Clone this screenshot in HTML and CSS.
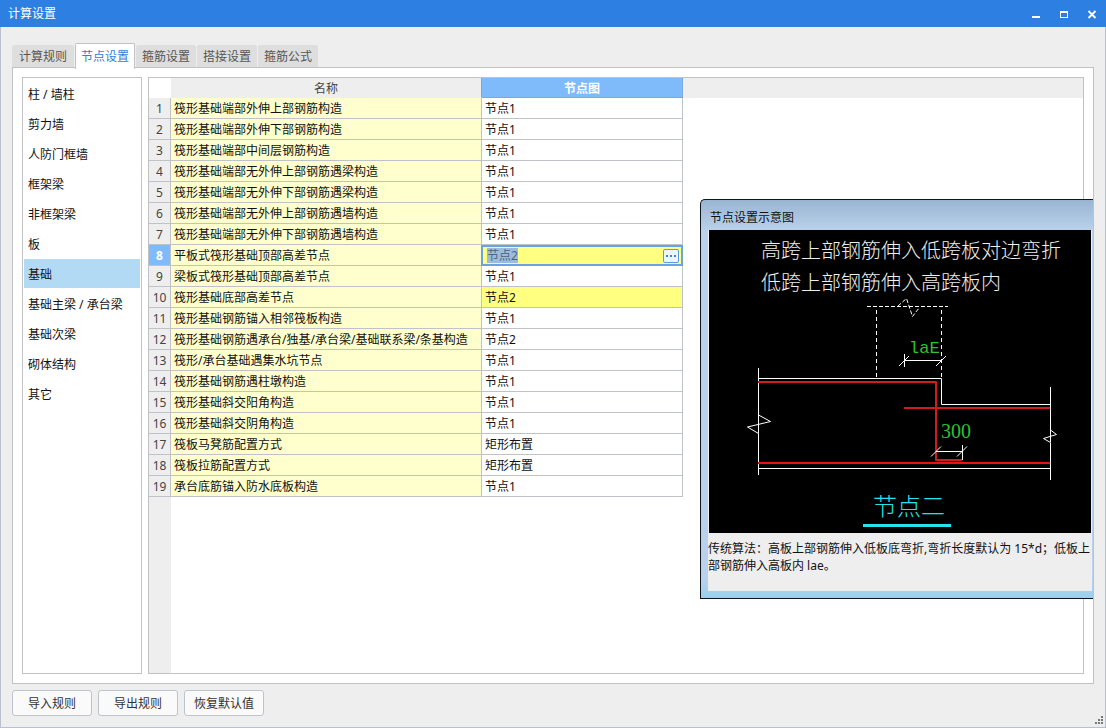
FILE: index.html
```html
<!DOCTYPE html>
<html lang="zh-CN">
<head>
<meta charset="utf-8">
<meta name="viewport" content="width=device-width, initial-scale=1">
<title>计算设置</title>
<link rel="stylesheet" href="styles.css">
</head>
<body>
<div class="window">
  <header class="titlebar">
    <h1 class="titlebar-text">计算设置</h1>
    <div class="window-controls">
      <button type="button" class="window-btn" aria-label="最小化"><svg width="10" height="10" viewBox="0 0 10 10"><path d="M1 7h8v2H1z" fill="#fff"/></svg></button>
      <button type="button" class="window-btn" aria-label="最大化"><svg width="10" height="10" viewBox="0 0 10 10"><path d="M1 2h8v7H1zM2 4v4h6V4z" fill="#fff" fill-rule="evenodd"/></svg></button>
      <button type="button" class="window-btn" aria-label="关闭"><svg width="10" height="10" viewBox="0 0 10 10"><path d="M1.500 2l7 7M8.500 2l-7 7" stroke="#fff" stroke-width="1.800"/></svg></button>
    </div>
  </header>

  <div class="tabs" role="tablist">
    <button type="button" role="tab" class="tab" aria-selected="false">计算规则</button>
    <button type="button" role="tab" class="tab tab-active" aria-selected="true">节点设置</button>
    <button type="button" role="tab" class="tab" aria-selected="false">箍筋设置</button>
    <button type="button" role="tab" class="tab" aria-selected="false">搭接设置</button>
    <button type="button" role="tab" class="tab" aria-selected="false">箍筋公式</button>
  </div>

  <main class="page">
    <nav class="categories">
      <a class="category" href="#">柱 / 墙柱</a>
      <a class="category" href="#">剪力墙</a>
      <a class="category" href="#">人防门框墙</a>
      <a class="category" href="#">框架梁</a>
      <a class="category" href="#">非框架梁</a>
      <a class="category" href="#">板</a>
      <a class="category category-active" href="#" aria-current="true">基础</a>
      <a class="category" href="#">基础主梁 / 承台梁</a>
      <a class="category" href="#">基础次梁</a>
      <a class="category" href="#">砌体结构</a>
      <a class="category" href="#">其它</a>
    </nav>

    <div class="grid-pane">
      <table class="grid">
        <colgroup><col class="col-index"><col class="col-name"><col class="col-node"></colgroup>
        <thead><tr><td class="corner"></td><th scope="col" class="head-name">名称</th><th scope="col" class="head-active">节点图</th></tr></thead>
        <tbody>
          <tr><th scope="row">1</th><td>筏形基础端部外伸上部钢筋构造</td><td>节点1</td></tr>
          <tr><th scope="row">2</th><td>筏形基础端部外伸下部钢筋构造</td><td>节点1</td></tr>
          <tr><th scope="row">3</th><td>筏形基础端部中间层钢筋构造</td><td>节点1</td></tr>
          <tr><th scope="row">4</th><td>筏形基础端部无外伸上部钢筋遇梁构造</td><td>节点1</td></tr>
          <tr><th scope="row">5</th><td>筏形基础端部无外伸下部钢筋遇梁构造</td><td>节点1</td></tr>
          <tr><th scope="row">6</th><td>筏形基础端部无外伸上部钢筋遇墙构造</td><td>节点1</td></tr>
          <tr><th scope="row">7</th><td>筏形基础端部无外伸下部钢筋遇墙构造</td><td>节点1</td></tr>
          <tr class="row-active"><th scope="row">8</th><td>平板式筏形基础顶部高差节点</td><td class="cell-editing"><div class="editor"><input class="editor-input" type="text" value="节点2" aria-label="平板式筏形基础顶部高差节点"><button type="button" class="editor-more" aria-label="选择节点图"><svg width="10" height="2" viewBox="0 0 10 2"><path d="M0 0h2v2H0zM4 0h2v2H4zM8 0h2v2H8z" fill="#3d86cc"/></svg></button></div></td></tr>
          <tr><th scope="row">9</th><td>梁板式筏形基础顶部高差节点</td><td>节点1</td></tr>
          <tr><th scope="row">10</th><td>筏形基础底部高差节点</td><td class="cell-changed">节点2</td></tr>
          <tr><th scope="row">11</th><td>筏形基础钢筋锚入相邻筏板构造</td><td>节点1</td></tr>
          <tr><th scope="row">12</th><td>筏形基础钢筋遇承台/独基/承台梁/基础联系梁/条基构造</td><td>节点2</td></tr>
          <tr><th scope="row">13</th><td>筏形/承台基础遇集水坑节点</td><td>节点1</td></tr>
          <tr><th scope="row">14</th><td>筏形基础钢筋遇柱墩构造</td><td>节点1</td></tr>
          <tr><th scope="row">15</th><td>筏形基础斜交阳角构造</td><td>节点1</td></tr>
          <tr><th scope="row">16</th><td>筏形基础斜交阴角构造</td><td>节点1</td></tr>
          <tr><th scope="row">17</th><td>筏板马凳筋配置方式</td><td>矩形布置</td></tr>
          <tr><th scope="row">18</th><td>筏板拉筋配置方式</td><td>矩形布置</td></tr>
          <tr><th scope="row">19</th><td>承台底筋锚入防水底板构造</td><td>节点1</td></tr>
        </tbody>
      </table>
    </div>

    <aside class="preview" aria-label="节点设置示意图">
      <h2 class="preview-title">节点设置示意图</h2>
      <div class="preview-body">
        <svg class="diagram" viewBox="709 230 382 303" role="img" aria-label="节点二">
          <rect x="709" y="230" width="382" height="303" fill="#000"/>
          <g class="diagram-note">
            <text x="761" y="258">高跨上部钢筋伸入低跨板对边弯折</text>
            <text x="761" y="290">低跨上部钢筋伸入高跨板内</text>
          </g>
          <g fill="none" stroke="#fff">
            <path d="M867 306.500H948" stroke-dasharray="4 2"/>
            <path d="M876.500 310V378M941.500 310V378" stroke-dasharray="4 3"/>
            <path d="M898 306L906.500 298.500L912.500 316.500L919 308" stroke-dasharray="4 2"/>
            <path d="M904.500 354V367M904 360.500H942M899 366L909 356M936 366L946 356"/>
            <path d="M758.500 368V415L770.500 421.500L747.500 427L758.500 433.500V475M758.500 415V433.500"/>
            <path d="M758 378.500H941.500V404.500H1050M758 468.500H1050"/>
            <path d="M1050.500 387V430L1056.500 434.500L1043.500 438.500L1050.500 442.500V480M1050.500 430V442"/>
          </g>
          <g fill="none" stroke="#d01c20" stroke-width="2">
            <path d="M758 382H936V460H962M904 408H1050" stroke-linejoin="round"/>
            <path d="M758 463H1050" stroke="#e61216"/>
          </g>
          <path d="M936 451.500H963M962.500 445V460M931 456.500L941 446.500M957 456.500L967 446.500" fill="none" stroke="#fff"/>
          <text class="diagram-anchor" x="909" y="353">laE</text>
          <text class="diagram-length" x="941" y="438">300</text>
          <text class="diagram-name" x="873" y="515">节点二</text>
          <path d="M863 525.500H951" stroke="#23e4ec" stroke-width="3"/>
        </svg>
        <p class="preview-text">传统算法：高板上部钢筋伸入低板底弯折,弯折长度默认为 15*d；低板上部钢筋伸入高板内 lae。</p>
      </div>
    </aside>
  </main>

  <footer class="actions">
    <button type="button" class="action">导入规则</button>
    <button type="button" class="action">导出规则</button>
    <button type="button" class="action">恢复默认值</button>
    <svg class="grip" width="9" height="9" viewBox="0 0 9 9"><path d="M6 0h2v2H6zM3 3h2v2H3zM6 3h2v2H6zM0 6h2v2H0zM3 6h2v2H3zM6 6h2v2H6z" fill="#777"/></svg>
  </footer>
</div>
</body>
</html>
```
FILE: styles.css
```css
* {
  box-sizing: border-box;
}

body {
  margin: 0;
  font-family: "Noto Sans", "Noto Sans CJK SC", sans-serif;
  font-size: 12px;
  line-height: 18px;
  color: #111;
}

button,
input {
  font: inherit;
}

.window {
  display: flex;
  flex-direction: column;
  min-height: 100vh;
  background: #eee;
  border: solid #b9c0d0;
  border-width: 0 1px 1px;
}

.titlebar {
  display: flex;
  align-items: center;
  justify-content: space-between;
  height: 27px;
  margin: 0 -1px;
  padding: 0 0 0 8px;
  background: #2d80e2;
  color: #fff;
}

.titlebar-text {
  margin: 0;
  font-size: 12px;
  font-weight: 400;
}

.window-controls {
  display: flex;
}

.window-btn {
  display: flex;
  align-items: center;
  justify-content: center;
  width: 28px;
  height: 27px;
  padding: 0;
  border: 0;
  background: none;
}

.tabs {
  display: flex;
  align-items: flex-end;
  gap: 1px;
  height: 41px;
  padding: 0 11px;
}

.tab {
  height: 23px;
  padding: 0 6px;
  border: 0;
  border-radius: 2px 2px 0 0;
  background: #dedede;
  color: #555;
  line-height: 22px;
}

.tab:first-child {
  padding: 0 7px;
}

.tab-active {
  z-index: 1;
  height: 26px;
  margin-bottom: -1px;
  padding: 0 5px;
  border: 1px solid #c0c2c6;
  border-bottom: 0;
  background: #fff;
  color: #2f7cd6;
  line-height: 24px;
}

.page {
  position: relative;
  display: flex;
  flex: 1;
  gap: 6px;
  margin: -1px 11px 0;
  padding: 9px;
  border: 1px solid #c0c2c6;
  background: #fff;
}

.categories {
  flex: 0 0 120px;
  padding: 1px;
  border: 1px solid #c0c2c6;
}

.category {
  display: block;
  height: 30px;
  padding: 3px 4px 0;
  border-bottom: 1px solid #fff;
  color: #111;
  line-height: 26px;
  text-decoration: none;
  white-space: nowrap;
}

.category-active {
  background: #b3daf5;
}

.grid-pane {
  flex: 1;
  min-width: 0;
  border: 1px solid #c0c2c6;
  background:
    linear-gradient(#eee, #eee) 0 0 / 22px 100% no-repeat,
    linear-gradient(#eee, #eee) 0 0 / 100% 20px no-repeat,
    #fff;
}

.grid {
  width: 534px;
  table-layout: fixed;
  border-collapse: separate;
  border-spacing: 0;
}

.col-index {
  width: 22px;
}

.col-name {
  width: 311px;
}

.col-node {
  width: 201px;
}

.grid th,
.grid td {
  height: 21px;
  padding: 2px 3px 0;
  border: solid #bfc3c7;
  border-width: 0 1px 1px 0;
  line-height: 18px;
  text-align: left;
  white-space: nowrap;
}

.grid thead th,
.grid thead td {
  height: 20px;
  border-color: #eee;
  background: #eee;
  color: #444;
  font-weight: 400;
  line-height: 17px;
  text-align: center;
}

.grid thead .corner {
  border-color: #fff;
  background: #fff;
}

.grid thead .head-name {
  border-right-color: #76a9dd;
}

.grid thead .head-active {
  border-color: #76a9dd;
  background: #7fbafa;
  color: #fff;
  font-weight: 700;
}

.grid tbody th {
  padding: 2px 0 0;
  background: #eee;
  color: #444;
  font-weight: 400;
  text-align: center;
}

.grid tbody td:nth-child(2) {
  background: #ffffcd;
}

.grid .row-active th {
  background: #7fbafa;
  color: #fff;
  font-weight: 700;
}

.grid .cell-changed {
  background: #ffff80;
}

.grid .cell-editing {
  padding: 0;
  border: 0;
}

.editor {
  display: flex;
  align-items: center;
  height: 21px;
  margin-left: -1px;
  padding: 0 2px 0 4px;
  border: 2px solid #68a3e2;
  background: #ffff80;
}

.editor-input {
  flex: 1;
  min-width: 0;
  height: 15px;
  padding: 0 2px 0 0;
  border: 0;
  outline: 0;
  background: linear-gradient(#9cbcdd, #9cbcdd) 0 0 / 31px 100% no-repeat;
  color: #4d6480;
  line-height: 15px;
}

.editor-more {
  display: flex;
  align-items: center;
  justify-content: center;
  width: 16px;
  height: 14px;
  padding: 0;
  border: 1px solid #5d9cdb;
  border-radius: 2px;
  background: #edf6ff;
}

.preview {
  position: absolute;
  top: 131px;
  right: 0;
  width: 393px;
  padding: 0 1px 7px 7px;
  border: solid #10151c;
  border-width: 1px 0 1px 1px;
  border-radius: 5px 0 0 0;
  background: linear-gradient(#9ab5d3, #b9d1ea 30px, #b9d1ea 380px, #9bd0ee);
}

.preview-title {
  height: 30px;
  margin: 0;
  padding: 9px 0 0 2px;
  font-size: 12px;
  font-weight: 400;
  line-height: 18px;
}

.preview-body {
  padding: 0 1px;
  background: #eee;
}

.diagram {
  display: block;
  width: 100%;
}

.diagram-note {
  fill: #eee;
  font-family: "Noto Sans CJK SC", sans-serif;
  font-size: 20px;
  font-weight: 300;
}

.diagram-anchor {
  fill: #2bc32f;
  font-family: "Liberation Mono", monospace;
  font-size: 17px;
}

.diagram-length {
  fill: #2bc32f;
  font-family: "Liberation Serif", serif;
  font-size: 20px;
}

.diagram-name {
  fill: #23e4ec;
  font-family: "Noto Sans CJK SC", sans-serif;
  font-size: 24px;
  font-weight: 300;
}

.preview-text {
  min-height: 58px;
  margin: 0 -1px;
  padding-top: 7px;
  line-height: 17px;
}

.actions {
  position: relative;
  display: flex;
  gap: 6px;
  padding: 6px 11px 11px;
}

.action {
  width: 80px;
  height: 26px;
  padding: 2px 0 0;
  border: 1px solid #bfc3cb;
  border-radius: 3px;
  background: #fafafb;
  color: #333;
}

.grip {
  position: absolute;
  right: 1px;
  bottom: 2px;
}
```
